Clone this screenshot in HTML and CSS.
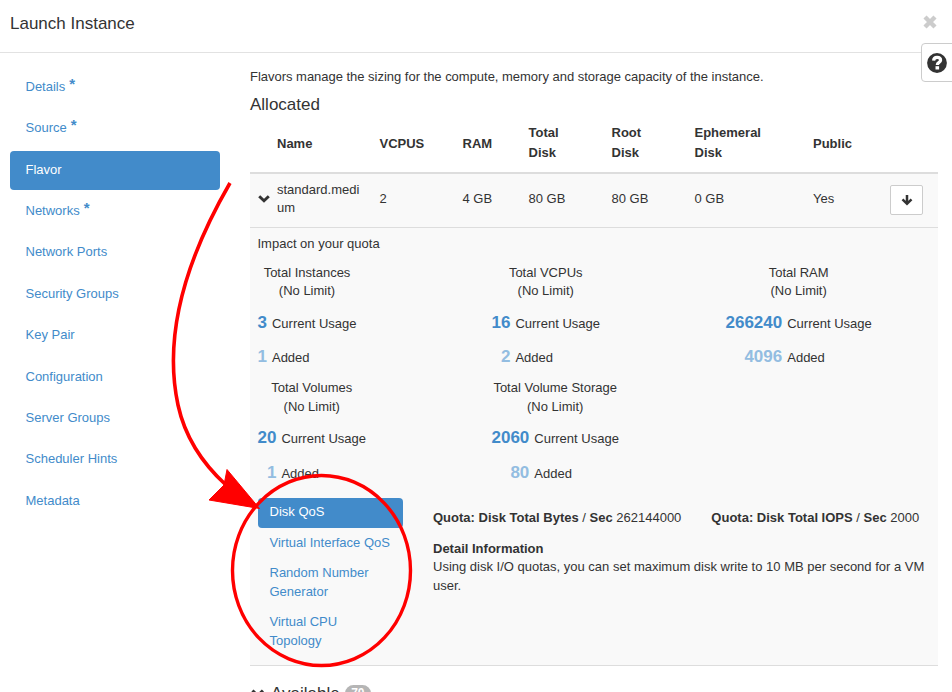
FILE: index.html
```html
<!DOCTYPE html>
<html lang="en">
<head>
<meta charset="utf-8">
<title>Launch Instance</title>
<link rel="stylesheet" href="styles.css">
</head>
<body>
<div class="modal">
  <header class="modal-header">
    <h1>Launch Instance</h1>
    <button class="close" aria-label="Close"><svg width="14" height="14" viewBox="0 0 14 14"><path d="M2 2 12 12M12 2 2 12" stroke="#ccc" stroke-width="4.4"/></svg></button>
  </header>
  <button class="help" aria-label="Help"><svg width="20" height="20" viewBox="0 0 20 20"><circle cx="10" cy="10" r="9.9" fill="#333"/><path d="M6.6 7.6C6.7 5.5 8 4.4 10.1 4.4S13.6 5.5 13.6 7.3C13.6 9.6 10.3 9.3 10.3 12" fill="none" stroke="#fff" stroke-width="3.2"/><path d="M8.5 13.2h3.6v3.3H8.5z" fill="#fff"/></svg></button>

  <div class="modal-body">
    <nav class="steps">
      <a>Details<b>*</b></a>
      <a>Source<b>*</b></a>
      <a class="active">Flavor</a>
      <a>Networks<b>*</b></a>
      <a>Network Ports</a>
      <a>Security Groups</a>
      <a>Key Pair</a>
      <a>Configuration</a>
      <a>Server Groups</a>
      <a>Scheduler Hints</a>
      <a>Metadata</a>
    </nav>

    <main class="content">
      <p class="intro">Flavors manage the sizing for the compute, memory and storage capacity of the instance.</p>
      <h2>Allocated</h2>
      <div class="row head">
        <span></span><span class="single">Name</span><span class="single">VCPUS</span><span class="single">RAM</span><span>Total<br>Disk</span><span>Root<br>Disk</span><span>Ephemeral<br>Disk</span><span class="single">Public</span><span></span>
      </div>
      <div class="row flavor">
        <span class="chevron"><svg width="12" height="8" viewBox="0 0 12 8"><path d="M1.2 1.2 6 5.8 10.8 1.2" fill="none" stroke="#333" stroke-width="2.9"/></svg></span>
        <span class="name">standard.medi<br>um</span><span class="single">2</span><span class="single">4 GB</span><span class="single">80 GB</span><span class="single">80 GB</span><span class="single">0 GB</span><span class="single">Yes</span>
        <button class="move" aria-label="Remove"><svg width="12" height="12" viewBox="0 0 12 12"><path d="M6 1V10M1.5 5.4 6 9.8 10.5 5.4" fill="none" stroke="#333" stroke-width="2.5"/></svg></button>
      </div>

      <section class="detail">
        <p class="impact">Impact on your quota</p>
        <div class="quotas">
          <div class="quota"><h3>Total Instances<br>(No Limit)</h3><b>3</b><span>Current Usage</span><b class="added">1</b><span>Added</span></div>
          <div class="quota"><h3>Total VCPUs<br>(No Limit)</h3><b>16</b><span>Current Usage</span><b class="added">2</b><span>Added</span></div>
          <div class="quota"><h3>Total RAM<br>(No Limit)</h3><b>266240</b><span>Current Usage</span><b class="added">4096</b><span>Added</span></div>
          <div class="quota lower"><h3>Total Volumes<br>(No Limit)</h3><b>20</b><span>Current Usage</span><b class="added">1</b><span>Added</span></div>
          <div class="quota lower"><h3>Total Volume Storage<br>(No Limit)</h3><b>2060</b><span>Current Usage</span><b class="added">80</b><span>Added</span></div>
        </div>
        <div class="metadata">
          <nav class="tabs">
            <a class="active">Disk QoS</a>
            <a>Virtual Interface QoS</a>
            <a>Random Number<br>Generator</a>
            <a>Virtual CPU<br>Topology</a>
          </nav>
          <div class="info">
            <div class="limits">
              <span><b>Quota: Disk Total Bytes</b> / <b>Sec</b> 262144000</span>
              <span><b>Quota: Disk Total IOPS</b> / <b>Sec</b> 2000</span>
            </div>
            <h4>Detail Information</h4>
            <p>Using disk I/O quotas, you can set maximum disk write to 10 MB per second for a VM user.</p>
          </div>
        </div>
      </section>
      <div class="available">
        <svg width="17" height="12" viewBox="0 0 17 12"><path d="M2.500 2.500 7.700 7.700 12.900 2.500" fill="none" stroke="#333" stroke-width="3"/></svg>
        <h2>Available</h2><span class="badge">70</span>
      </div>
    </main>
  </div>

  <svg class="annotation" width="952" height="692" viewBox="0 0 952 692">
    <path d="M230 183C182 266 164 340 178 405C185 437 203 464 226 485" fill="none" stroke="#f00" stroke-width="3.6"/>
    <path d="M227 469.5 259.5 508.5 209 500 224 485Z" fill="#f00" stroke="#f00" stroke-linejoin="round"/>
    <ellipse cx="321.5" cy="570.5" rx="89" ry="95" fill="none" stroke="#f00" stroke-width="3.4"/>
  </svg>
</div>
</body>
</html>
```
FILE: styles.css
```css
* { box-sizing: border-box; }
body {
  margin: 0;
  background: #fff;
  color: #333;
  font: 13px/18.57px "Liberation Sans", Arial, sans-serif;
}
h1, h2, h3, h4, p { margin: 0; font-weight: 400; }
button { padding: 0; margin: 0; }
svg { display: block; }

.modal { position: relative; width: 952px; height: 692px; overflow: hidden; }
.modal-header {
  display: flex;
  justify-content: space-between;
  height: 53px;
  padding: 14px 15px 0 10px;
  border-bottom: 1px solid #e2e2e2;
}
.modal-header h1 { font-size: 17px; line-height: 20px; }
.close { align-self: flex-start; margin-top: 1px; border: 0; background: none; }
.help {
  position: absolute;
  top: 43px;
  left: 921px;
  width: 40px;
  height: 39px;
  padding-left: 5px;
  border: 1px solid #ccc;
  border-radius: 4px;
  background: #fff;
}

.modal-body { display: grid; grid-template-columns: 210px 688px; gap: 30px; padding-left: 10px; }
.steps { display: flex; flex-direction: column; gap: 2px; padding-top: 15.2px; }
.steps a {
  height: 39.4px;
  padding: 9.6px 15.5px 0;
  border-radius: 4px;
  color: #428bca;
}
.steps b { margin-left: 4px; font-size: 15px; line-height: 0; position: relative; top: -2px; }
a.active { background: #428bca; color: #fff; }

.intro { padding-top: 14px; line-height: 19px; letter-spacing: -0.02px; }
h2 { font-size: 17px; line-height: 20px; }
.intro + h2 { margin-top: 9px; }
.row {
  display: grid;
  grid-template-columns: 27px 102.5px 83px 66px 83px 83px 118.5px 77px 33px;
  align-items: center;
}
.head { height: 59px; padding-bottom: 2px; border-bottom: 2px solid #ddd; font-weight: 700; line-height: 20px; }
.head .single { padding-top: 2px; }
.flavor { height: 54px; background: #f9f9f9; border-bottom: 1px solid #ddd; padding-bottom: 4px; }
.flavor .single { padding-top: 1px; }
.name { line-height: 18px; }
.chevron { padding: 1px 0 0 8px; }
.move {
  display: grid;
  place-items: center;
  width: 33px;
  height: 30px;
  margin-top: 3px;
  border: 1px solid #ccc;
  border-radius: 2px;
  background: #fff;
}

.detail { height: 438px; padding: 7px 8px 0 7.5px; background: #f9f9f9; border-bottom: 1px solid #ddd; }
.quotas {
  display: grid;
  grid-template-columns: repeat(3, 234px);
  grid-auto-rows: 115.3px;
  padding-top: 10px;
  justify-items: start;
}
.quota {
  display: grid;
  grid-template-columns: auto auto;
  grid-template-rows: 42px 34.3px 34px;
  column-gap: 5px;
  align-content: start;
}
.quota.lower { grid-template-rows: 42px 35px 34px; }
.quota h3 { grid-column: 1 / -1; font-size: 13px; text-align: center; }
.quota.lower h3 { margin-top: -1px; line-height: 19px; }
.quota b { font-size: 17px; line-height: 34px; color: #428bca; text-align: right; }
.quota b.added { color: #93bde1; }
.quota span { line-height: 36px; }
.metadata { display: grid; grid-template-columns: 145px 1fr; gap: 30px; margin: 4px 0 0 0.5px; }
.tabs a { display: block; padding: 4px 11.5px 7px; border-radius: 4px; color: #428bca; line-height: 19px; }
.tabs a.active { height: 30px; color: #fff; margin-bottom: 1px; }
.info { padding-top: 11px; }
.limits { display: flex; gap: 30px; white-space: nowrap; }
.info h4 { margin-top: 12px; font-size: 13px; font-weight: 700; }
.available { display: flex; align-items: center; height: 20px; margin-top: 18px; }
.available h2 { margin-left: 4px; }
.badge {
  margin: 0 0 1px 5px;
  padding: 0 6.5px;
  border-radius: 10px;
  background: #b5b5b5;
  color: #fff;
  font: 700 12px/17px "Liberation Sans", Arial, sans-serif;
}
.annotation { position: absolute; inset: 0; pointer-events: none; }
```
